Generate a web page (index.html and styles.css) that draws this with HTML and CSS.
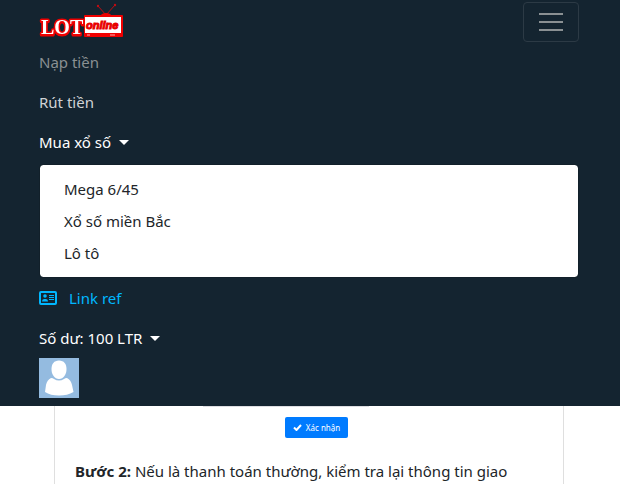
FILE: index.html
```html
<!DOCTYPE html>
<html lang="vi">
<head>
<meta charset="utf-8">
<meta name="viewport" content="width=device-width, initial-scale=1">
<title>LOT online</title>
<link rel="stylesheet" href="styles.css">
</head>
<body>
<header class="navbar">
  <div class="bar">
    <a class="brand" href="#" aria-label="LOT online">
      <svg width="86" height="40" viewBox="0 0 86 40">
        <text class="brand-lot" x="2" y="32">LOT</text>
        <path d="M67 13 59 4M67 13 76 3" fill="none" stroke="#b80d12" stroke-width="1"/>
        <circle cx="59" cy="4" r="1.200" fill="#c00c12"/>
        <circle cx="76" cy="3" r="1.200" fill="#c00c12"/>
        <path d="M61 14q2-3 6-3t6 3z" fill="#e00"/>
        <rect x="45" y="13" width="39" height="22" rx="1" fill="#f00000"/>
        <rect x="46" y="15" width="36" height="16" fill="#fff"/>
        <path d="M48 33h3M71 33h5" stroke="#ffb0b0" stroke-width="1"/>
        <text class="brand-online" x="47" y="27">online</text>
      </svg>
    </a>
    <button class="toggler" type="button" aria-label="Menu" aria-expanded="true">
      <svg width="30" height="30" viewBox="0 0 30 30"><path d="M4 7h22M4 15h22M4 23h22" stroke="#8a9093" stroke-width="2" stroke-linecap="square"/></svg>
    </button>
  </div>
  <nav class="nav">
    <a class="nav-link dim" href="#">Nạp tiền</a>
    <a class="nav-link soft" href="#">Rút tiền</a>
    <a class="nav-link" href="#" aria-expanded="true">Mua xổ số<span class="caret"></span></a>
    <div class="menu">
      <a class="menu-item" href="#">Mega 6/45</a>
      <a class="menu-item" href="#">Xổ số miền Bắc</a>
      <a class="menu-item" href="#">Lô tô</a>
    </div>
    <a class="nav-link ref" href="#">
      <svg class="card-icon" width="18" height="14" viewBox="0 0 18 14">
        <rect x="1" y="1" width="16" height="12" rx="1" fill="none" stroke="currentColor" stroke-width="2"/>
        <circle cx="6" cy="5" r="1.800" fill="currentColor"/>
        <path d="M3 10.500q0-2.500 2-2.500h2q2 0 2 2.500z" fill="currentColor"/>
        <path d="M10 4.500h5M10 6.500h5M10 8.500h5" stroke="currentColor" stroke-width="1"/>
      </svg>Link ref</a>
    <a class="nav-link" href="#">Số dư: 100 LTR<span class="caret"></span></a>
    <a class="avatar" href="#" aria-label="Tài khoản">
      <svg width="40" height="40" viewBox="0 0 40 40">
        <rect width="40" height="40" fill="#94bbe0"/>
        <path d="M20 2.500c5 0 7.500 3.500 7.500 8.500 0 5.500-3 10-7.500 10s-7.500-4.500-7.500-10c0-5 2.500-8.500 7.500-8.500z" fill="#fff"/>
        <path d="M12 20q2 0 3 1 5 3 10 0 1-1 3-1 4 2 5 7l1.500 7q-6 3.500-14.500 3.500t-14-3.500l1-7q1-5 5-7z" fill="#fff"/>
      </svg>
    </a>
  </nav>
</header>
<main class="page">
  <section class="card">
    <div class="shot"></div>
    <button class="confirm" type="button">
      <svg width="9" height="7" viewBox="0 0 9 7"><path d="M1 3.500 3.500 6 8 1" fill="none" stroke="#fff" stroke-width="2"/></svg>
      Xác nhận
    </button>
    <p class="step"><strong>Bước 2:</strong> Nếu là thanh toán thường, kiểm tra lại thông tin giao</p>
  </section>
</main>
</body>
</html>
```
FILE: styles.css
```css
* { box-sizing: border-box; }
body {
  margin: 0;
  background: #fff;
  color: #212529;
  font-family: "Segoe UI", "Noto Sans", "Open Sans", sans-serif;
  font-size: 15px;
  line-height: 24px;
}
a { color: inherit; text-decoration: none; }
svg { display: block; }
.navbar {
  padding: 2px 41px 8px 39px;
  background: #142430;
  color: #fff;
}
.bar {
  display: flex;
  align-items: center;
  justify-content: space-between;
}
.brand-lot {
  font: bold 20px "Liberation Serif", serif;
  fill: #fff;
  stroke: #f00000;
  stroke-width: 3px;
  stroke-linejoin: round;
  paint-order: stroke;
  filter: drop-shadow(0 1px 0 #f00000);
}
.brand-online {
  font: italic bold 11px "Liberation Sans", sans-serif;
  fill: #e80000;
  stroke: #e80000;
  stroke-width: 1px;
}
.toggler {
  display: flex;
  align-items: center;
  justify-content: center;
  width: 56px;
  height: 40px;
  padding: 0;
  background: none;
  border: 1px solid #2c3a45;
  border-radius: 4px;
}
.nav { display: flex; flex-direction: column; }
.nav-link {
  display: flex;
  align-items: center;
  padding: 8px 0;
}
.dim { color: #8a9093; }
.soft { color: #d0d3d6; }
.ref { color: #00b7ff; }
.card-icon { margin-right: 12px; }
.caret {
  margin-left: 8px;
  border: 5px solid transparent;
  border-top-color: currentColor;
  border-bottom: 0;
}
.menu {
  margin-top: 2px;
  padding: 8px 0;
  background: #fff;
  background-clip: padding-box;
  border: 1px solid #12202a;
  border-radius: 4px;
  color: #212529;
}
.menu-item { display: block; padding: 4px 24px; }
.avatar { align-self: flex-start; }
.page { padding: 0 56px 0 54px; }
.card {
  padding: 0 20px 24px;
  border: solid #dfdfdf;
  border-width: 0 1px;
}
.shot {
  width: 166px;
  height: 1px;
  margin-left: 128px;
  background: #dedee2;
}
.confirm {
  display: flex;
  align-items: center;
  justify-content: center;
  gap: 4px;
  width: 63px;
  height: 21px;
  margin: 10px 0 0 210px;
  padding: 0;
  background: #007bff;
  border: 0;
  border-radius: 2px;
  color: #fff;
  font: 8px "Noto Sans", "Open Sans", sans-serif;
}
.step { margin: 21px 0 0; }
```
